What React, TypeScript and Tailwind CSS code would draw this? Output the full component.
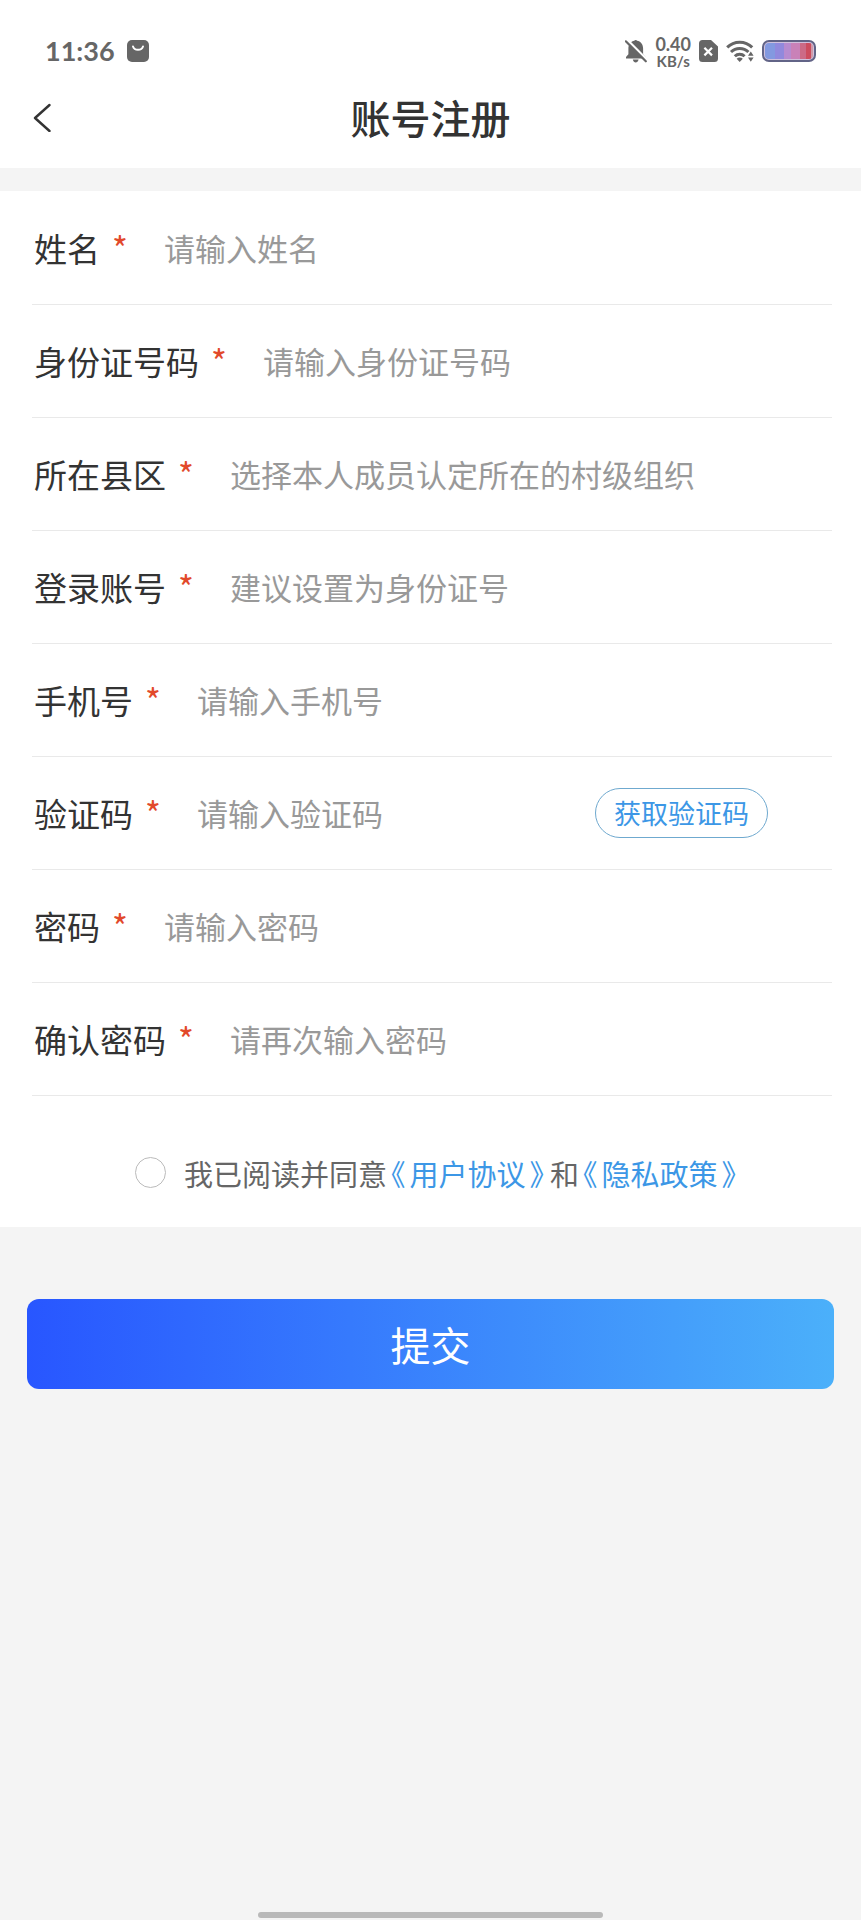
import React, { useState } from 'react';

type FieldProps = {
    id: string;
    label: string;
    placeholder: string;
    type?: string;
    options?: string[];
    action?: React.ReactNode;
};

const controlClass = 'min-w-0 flex-1 appearance-none bg-transparent p-0 text-[31px] leading-[44px] outline-none';

const Field: React.FC<FieldProps> = ({ id, label, placeholder, type = 'text', options, action }) => {
    const [value, setValue] = useState('');

    return (
        <div className="flex h-[113px] items-center border-b border-[#e9e9e9] pl-0.5">
            <label htmlFor={id} className="flex shrink-0 items-center text-[33px] leading-[44px] text-[#333]">
                {label}
                <span className="ml-3 w-[52px] text-[34px] text-[#e2492b]">*</span>
            </label>
            {options ? (
                <select
                    id={id}
                    value={value}
                    onChange={e => setValue(e.target.value)}
                    className={`${controlClass} ${value ? 'text-[#333]' : 'text-[#999]'}`}
                >
                    <option value="">{placeholder}</option>
                    {options.map(o => <option key={o} value={o}>{o}</option>)}
                </select>
            ) : (
                <input
                    id={id}
                    type={type}
                    value={value}
                    onChange={e => setValue(e.target.value)}
                    placeholder={placeholder}
                    className={`${controlClass} text-[#333] placeholder:text-[#999]`}
                />
            )}
            {action}
        </div>
    );
};

const BagIcon = () => (
    <svg width="22" height="22" viewBox="0 0 22 22" aria-hidden="true">
        <rect width="22" height="22" rx="5" fill="#666" />
        <path d="M6 6.5a5.2 4.6 0 0 0 10 0" fill="none" stroke="#fff" strokeWidth="2" strokeLinecap="round" />
    </svg>
);

const BellOffIcon = () => (
    <svg width="22" height="24" viewBox="0 0 22 24" aria-hidden="true">
        <path d="M1 19.5v-1.6l2.4-2.6V9.6C3.4 5.2 6.2 2.4 9.3 1.8c.3-1 2.5-1 2.8 0 3.4.6 6 3.5 6 7.8v5.7l2.4 2.6v1.6zM7.8 20.5h5.8c-.4 1.9-1.6 3-2.9 3s-2.5-1.1-2.9-3z" fill="#666" />
        <path d="M2.5 1.2l19.5 19.5" stroke="#fff" strokeWidth="2.4" />
        <path d="M.8 2.3l20 20" stroke="#666" strokeWidth="2.2" strokeLinecap="round" />
    </svg>
);

const SimIcon = () => (
    <svg width="19" height="22" viewBox="0 0 19 22" aria-hidden="true">
        <path d="M3.5 0H12l7 6.5v12a3.5 3.5 0 0 1-3.5 3.5h-12A3.5 3.5 0 0 1 0 18.5v-15A3.5 3.5 0 0 1 3.5 0z" fill="#666" />
        <path d="M5.4 7.8l7.6 7.6M13 7.8l-7.6 7.6" stroke="#fff" strokeWidth="2.2" />
    </svg>
);

const WifiIcon = () => (
    <svg width="28" height="22" viewBox="0 0 28 22" aria-hidden="true">
        <g fill="none" stroke="#666" strokeWidth="3">
            <path d="M1.2 7.4a17.5 17.5 0 0 1 25 0" />
            <path d="M5 12a12.3 12.3 0 0 1 17.4 0" />
            <path d="M8.8 16.3a7 7 0 0 1 9.8 0" />
        </g>
        <path d="M10.6 18.8a4.4 4.4 0 0 1 6.2 0L13.7 22z" fill="#666" />
        <path d="M22 15.8l2.8-4.4 2.8 4.400zM22 17.4l2.8 4.400 2.8-4.400z" fill="#666" />
    </svg>
);

const BatteryIcon = () => (
    <svg width="54" height="22" viewBox="0 0 54 22" aria-hidden="true">
        <defs>
            <clipPath id="battery-level">
                <rect x="3" y="3" width="48" height="16" rx="4" />
            </clipPath>
        </defs>
        <rect x="1" y="1" width="52" height="20" rx="6" fill="#cfc0dc" stroke="#626487" strokeWidth="2" />
        <g clipPath="url(#battery-level)">
            <rect x="3" width="11" height="22" fill="#8399e0" />
            <rect x="13" width="9" height="22" fill="#9189dd" />
            <rect x="22" width="7" height="22" fill="#b78bd0" />
            <rect x="29" width="9" height="22" fill="#c981b8" />
            <rect x="38" width="6" height="22" fill="#cc6a86" />
            <rect x="44" width="5" height="22" fill="#cd4c5e" />
            <rect x="49" width="2" height="22" fill="#d09aa8" />
        </g>
    </svg>
);

const StatusBar = () => (
    <div className="flex h-[102px] items-center justify-between px-[45px] text-[#666]">
        <div className="flex items-center gap-3">
            <span className="font-['Lato',sans-serif] text-[27px] font-bold leading-8">11:36</span>
            <BagIcon />
        </div>
        <div className="flex items-center gap-2">
            <BellOffIcon />
            <div className="flex flex-col items-center pt-0.5 font-['Lato',sans-serif] font-bold">
                <span className="text-[18px] leading-[18px]">0.40</span>
                <span className="text-[15px] leading-4">KB/s</span>
            </div>
            <SimIcon />
            <WifiIcon />
            <BatteryIcon />
        </div>
    </div>
);

const SmsButton = () => (
    <button type="button" className="mr-16 h-[50px] shrink-0 rounded-full border border-[#6fa9cf] px-[18px] text-[27px] leading-9 text-[#3c97e6]">
        获取验证码
    </button>
);

// brackets are set half-width so they hug the words around them
const AgreementLink: React.FC<{ children: string }> = ({ children }) => (
    <a href="#" className="text-[#3c97e6] [font-feature-settings:'halt']">
        <span className="mx-1">《</span>
        {children}
        <span className="ml-1 mr-1.5">》</span>
    </a>
);

export default function App() {
    const [agreed, setAgreed] = useState(false);

    return (
        <div className="flex min-h-screen flex-col bg-[#f4f4f4] font-['Noto_Sans_CJK_SC',sans-serif]">
            <header className="bg-white">
                <StatusBar />
                <div className="grid h-[66px] grid-cols-[1fr_auto_1fr] items-start px-8">
                    <button type="button" aria-label="返回" className="justify-self-start">
                        <svg width="20" height="30" viewBox="0 0 20 30" fill="none" stroke="#333" strokeWidth="2.4" strokeLinecap="round" strokeLinejoin="round">
                            <path d="M17.5 3L3 16l14.5 13" />
                        </svg>
                    </button>
                    <h1 className="text-[40px] font-medium leading-[30px] text-[#333]">账号注册</h1>
                </div>
            </header>

            <form className="mt-[23px]" onSubmit={e => e.preventDefault()}>
                <div className="bg-white">
                    <div className="ml-8 mr-[29px] pt-px">
                        <Field id="name" label="姓名" placeholder="请输入姓名" />
                        <Field id="idcard" label="身份证号码" placeholder="请输入身份证号码" />
                        <Field id="county" label="所在县区" placeholder="选择本人成员认定所在的村级组织" options={[]} />
                        <Field id="account" label="登录账号" placeholder="建议设置为身份证号" />
                        <Field id="phone" label="手机号" placeholder="请输入手机号" type="tel" />
                        <Field id="code" label="验证码" placeholder="请输入验证码" action={<SmsButton />} />
                        <Field id="password" label="密码" placeholder="请输入密码" type="password" />
                        <Field id="confirm" label="确认密码" placeholder="请再次输入密码" type="password" />
                    </div>
                    <div className="flex h-[131px] items-center justify-center pl-4 pt-[22px] text-[29px] leading-10 text-[#666]">
                        <input
                            id="agree"
                            type="checkbox"
                            checked={agreed}
                            onChange={e => setAgreed(e.target.checked)}
                            className="mr-[18px] size-[31px] appearance-none rounded-full border border-[#bbb] bg-white checked:border-[#3c97e6] checked:bg-[#3c97e6]"
                        />
                        <label htmlFor="agree">我已阅读并同意</label>
                        <AgreementLink>用户协议</AgreementLink>
                        <span>和</span>
                        <AgreementLink>隐私政策</AgreementLink>
                    </div>
                </div>

                <div className="px-[27px] pt-[72px]">
                    <button type="submit" className="h-[90px] w-full rounded-xl bg-linear-to-r/srgb from-[#2856ff] to-[#4bb0fa] text-[40px] text-white">
                        提交
                    </button>
                </div>
            </form>

            <div className="mx-auto mb-0.5 mt-auto h-1.5 w-2/5 rounded-full bg-[#b9b9b9]" />
        </div>
    );
}
